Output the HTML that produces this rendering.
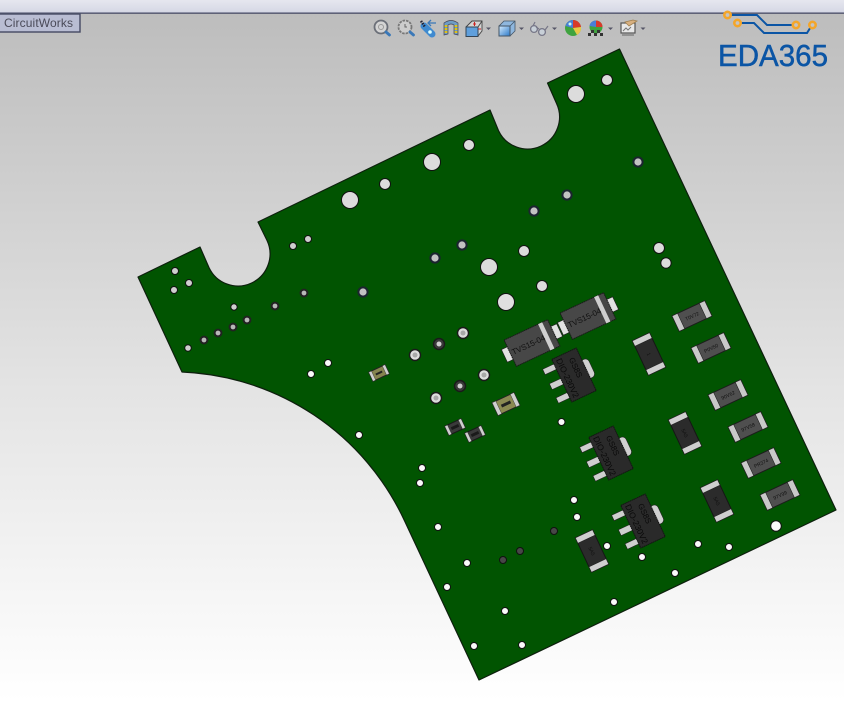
<!DOCTYPE html>
<html>
<head>
<meta charset="utf-8">
<style>
html,body{margin:0;padding:0;width:844px;height:701px;overflow:hidden;background:#fff}
svg{display:block}
text{font-family:"Liberation Sans",sans-serif}
</style>
</head>
<body>
<svg width="844" height="701" viewBox="0 0 844 701" xmlns="http://www.w3.org/2000/svg">
<defs>
<linearGradient id="bg" gradientUnits="userSpaceOnUse" x1="0" y1="14" x2="0" y2="701">
<stop offset="0" stop-color="#bdbdbd"/><stop offset=".55" stop-color="#e4e4e4"/><stop offset="1" stop-color="#ffffff"/>
</linearGradient>
<linearGradient id="top" x1="0" y1="0" x2="0" y2="1">
<stop offset="0" stop-color="#e6e7ef"/><stop offset="1" stop-color="#d6d8e5"/>
</linearGradient>
<linearGradient id="blue" x1="0" y1="0" x2="1" y2="1"><stop offset="0" stop-color="#d5ecff"/><stop offset="1" stop-color="#2a78c8"/></linearGradient>
<g id="r">
<rect x="-18" y="-8.5" width="36" height="17" fill="#4f4f4f" stroke="#1c1c1c"/>
<rect x="-18" y="-8.5" width="6" height="17" fill="#c9c9c9" stroke="#222" stroke-width=".6"/>
<rect x="12" y="-8.5" width="6" height="17" fill="#c9c9c9" stroke="#222" stroke-width=".6"/>
</g>
<g id="d">
<rect x="-19" y="-9.5" width="38" height="19" fill="#2b2b2b" stroke="#151515"/>
<rect x="-19" y="-9.5" width="6" height="19" fill="#cfcfcf" stroke="#222" stroke-width=".6"/>
<rect x="13" y="-9.5" width="6" height="19" fill="#cfcfcf" stroke="#222" stroke-width=".6"/>
</g>
<g id="smb">
<rect x="-30.5" y="-7" width="8" height="14" fill="#e2e2e2" stroke="#222" stroke-width=".7"/>
<rect x="22.5" y="-7" width="8" height="14" fill="#e2e2e2" stroke="#222" stroke-width=".7"/>
<rect x="-24" y="-14.5" width="48" height="29" fill="#474747" stroke="#1a1a1a" stroke-dasharray="1.5 .5"/>
<rect x="13.5" y="-14.5" width="4.5" height="29" fill="#cfcfcf"/>
</g>
<g id="sot">
<rect x="-26" y="-18.5" width="13" height="6" fill="#cfcfcf" stroke="#222" stroke-width=".6"/>
<rect x="-26" y="-2.5" width="13" height="6.5" fill="#cfcfcf" stroke="#222" stroke-width=".6"/>
<rect x="-26" y="13" width="13" height="6" fill="#cfcfcf" stroke="#222" stroke-width=".6"/>
<rect x="10" y="-10" width="9.5" height="20" rx="4" fill="#d0d0d0" stroke="#222" stroke-width=".6"/>
<rect x="-13.5" y="-23.5" width="27" height="47" fill="#2a2a2a" stroke="#141414" stroke-dasharray="1.5 .5"/>
</g>
<g id="s1">
<rect x="-9" y="-5" width="18" height="10" fill="#85834f" stroke="#222"/>
<rect x="-9" y="-5" width="3" height="10" fill="#cfcfcf" stroke="#333" stroke-width=".4"/>
<rect x="6" y="-5" width="3" height="10" fill="#cfcfcf" stroke="#333" stroke-width=".4"/>
<rect x="-3.5" y="-1" width="7" height="2" fill="#222"/>
</g>
<g id="s2">
<rect x="-12" y="-7" width="24" height="14" fill="#8b8a52" stroke="#222"/>
<rect x="-12" y="-7" width="4" height="14" fill="#cfcfcf" stroke="#333" stroke-width=".4"/>
<rect x="8" y="-7" width="4" height="14" fill="#cfcfcf" stroke="#333" stroke-width=".4"/>
<rect x="-5" y="-1.5" width="10" height="3" fill="#222"/>
</g>
<g id="s3">
<rect x="-9" y="-5" width="18" height="10" fill="#3a3a3a" stroke="#191919"/>
<rect x="-9" y="-5" width="3" height="10" fill="#cfcfcf" stroke="#333" stroke-width=".4"/>
<rect x="6" y="-5" width="3" height="10" fill="#cfcfcf" stroke="#333" stroke-width=".4"/>
<rect x="-4" y="-1.5" width="8" height="3" fill="#1a1a1a"/>
</g>
</defs>

<rect width="844" height="701" fill="url(#bg)"/>
<rect width="844" height="12" fill="url(#top)"/>
<rect y="12" width="844" height="1" fill="#8d90a5"/>
<rect y="13" width="844" height="1" fill="#5f6277"/>

<!-- tab -->
<rect x="-2" y="14" width="82" height="18" fill="#b9bdd3" stroke="#454a63" stroke-width="1.4"/>
<text x="4" y="27" font-size="12" fill="#4a4a58" textLength="69">CircuitWorks</text>

<!-- toolbar icons -->
<g>
<circle cx="381" cy="27" r="6.500" fill="#d4d4d4" stroke="#6b6f78" stroke-width="1.800"/><circle cx="381" cy="27" r="2.500" fill="none" stroke="#999"/>
<path d="M386,32 L389.500,35" stroke="#3a78b8" stroke-width="2.800" stroke-linecap="round"/>
<circle cx="405" cy="27" r="6.500" fill="#cccccc" stroke="#777" stroke-width="1.800" stroke-dasharray="2.500 1"/><path d="M405,24v3h2" stroke="#666" fill="none"/>
<path d="M410,32 L413.500,35" stroke="#3a78b8" stroke-width="2.800" stroke-linecap="round"/>
<path d="M424,26 L432,34" stroke="#3f8ad0" stroke-width="7" stroke-linecap="round"/>
<path d="M421,21 L425,27" stroke="#223" stroke-width="2.500" stroke-dasharray="1.500 1"/>
<circle cx="430" cy="32" r="1.800" fill="#dff"/>
<path d="M428,23 H436 M431,20 L428,23 L431,26" stroke="#3a78b8" stroke-width="1.300" fill="none"/>
<path d="M444,23 Q451,18 458,23 V35 L454,34 V25 Q451,23 448,25 V34 L444,35 Z" fill="#6f9cc4" stroke="#445" stroke-width=".7"/>
<path d="M446,25 V34 M456,25 V34" stroke="#e0c21a" stroke-width="2.800" stroke-dasharray="2 1"/>
<path d="M466,27 L472,21 H482 V31 L478,36 H466Z" fill="#d4d4d4" stroke="#444" stroke-width=".9"/>
<rect x="466" y="27" width="12" height="9.500" fill="#5f9fdc" stroke="#345"/>
<path d="M478,27 L482,21" stroke="#444" stroke-width=".9"/>
<path d="M473,24 h3 m-1.500,-2 v4 M478,29 h3" stroke="#c22" stroke-width="1"/>
<path d="M486,27.500 h5 l-2.500,2.500z" fill="#556"/>
<path d="M499,26 L504,21 H515 V31 L510,36 H499Z" fill="#8fb7de" stroke="#456" stroke-width=".8"/>
<rect x="499" y="26" width="11" height="10" fill="url(#blue)" stroke="#456"/>
<path d="M510,26 L515,21" stroke="#456" stroke-width=".8"/>
<path d="M519,27.500 h5 l-2.500,2.500z" fill="#556"/>
<circle cx="534" cy="29" r="3.400" fill="#c8d0d8" stroke="#778" stroke-width="1.300"/><circle cx="542" cy="32" r="3.400" fill="#c8d0d8" stroke="#778" stroke-width="1.300"/>
<path d="M536,27 L539,29 M545,30 L548,26 M533,26 L535,22" stroke="#778" fill="none" stroke-width="1.200"/>
<path d="M552,27.500 h5 l-2.500,2.500z" fill="#556"/>
<circle cx="573" cy="28" r="8" fill="#3fa33f"/>
<path d="M573,28 L565.500,26 A8,8 0 0 1 573,20Z" fill="#4a7ed8"/><path d="M573,28 V20 A8,8 0 0 1 581,27Z" fill="#d83a2a"/>
<path d="M573,28 L581,27 A8,8 0 0 1 577,35Z" fill="#e8c94a"/><circle cx="570" cy="24" r="1.500" fill="#cfe"/>
<circle cx="596" cy="27" r="6.500" fill="#3fa33f"/>
<path d="M596,27 L589.500,26 A6.500,6.500 0 0 1 596,20.500Z" fill="#4a7ed8"/><path d="M596,27 V20.500 A6.500,6.500 0 0 1 602.500,27Z" fill="#d83a2a"/>
<path d="M588,33 h3v3h-3z M594,33 h3v3h-3z M600,33 h3v3h-3z M591,30 h3v3h-3z M597,30 h3v3h-3z" fill="#333"/>
<path d="M608,27.500 h5 l-2.500,2.500z" fill="#556"/>
<rect x="621" y="23" width="14" height="10" fill="#e8e8e8" stroke="#555" stroke-width="1.200"/>
<path d="M622,35 h12" stroke="#666"/>
<path d="M625,22 l8,-2 4,1 -8,5z" stroke="#a08050" fill="#d8b080" stroke-width=".8"/>
<path d="M623,31 l3,-3 2,2 3,-3" stroke="#777" fill="none"/>
<path d="M640.500,27.500 h5 l-2.500,2.500z" fill="#556"/>
</g>

<!-- logo -->
<path d="M728,15 H757 L767,25 H796" stroke="#0b55a5" stroke-width="2" fill="none"/>
<path d="M737,23 H754 L764,33 H807 L812,25" stroke="#0b55a5" stroke-width="2" fill="none"/>
<g fill="#c4c4c4" stroke="#f4a62a" stroke-width="2.600">
<circle cx="727.500" cy="15" r="3.200"/><circle cx="737.500" cy="23" r="3.200"/><circle cx="796" cy="25" r="3.200"/><circle cx="812.500" cy="25" r="3.200"/>
</g>
<text x="718" y="66" font-size="31" fill="#0b55a5" stroke="#0b55a5" stroke-width=".5" textLength="110" lengthAdjust="spacingAndGlyphs">EDA365</text>

<!-- board -->
<path d="M138,277 L200,247 L209,267.600 A32,32 0 0 0 267,240.400 L258,222 L490,110 L498.500,130.600 A32,32 0 0 0 556.500,103.400 L547.500,83 L619.500,49 L836,510 L479,680 L404.400,520.500 A257,257 0 0 0 182,372 Z" fill="#015401" stroke="#0d1f0d" stroke-width="1.200" stroke-linejoin="round"/>

<!-- large holes -->
<g fill="#dcdcdc" stroke="#111" stroke-width="1">
<circle cx="576" cy="94" r="8.500"/><circle cx="432" cy="162" r="8.500"/><circle cx="350" cy="200" r="8.500"/>
<circle cx="489" cy="267" r="8.500"/><circle cx="506" cy="302" r="8.500" fill="#e0e0e0"/>
<circle cx="607" cy="80" r="5.500"/><circle cx="469" cy="145" r="5.500"/><circle cx="385" cy="184" r="5.500"/>
<circle cx="524" cy="251" r="5.500"/><circle cx="542" cy="286" r="5.500"/><circle cx="659" cy="248" r="5.500"/><circle cx="666" cy="263" r="5.200"/>
</g>
<!-- gray plated -->
<g fill="#c2c2c2" stroke="#1c2430" stroke-width="2">
<circle cx="638" cy="162" r="4.600"/><circle cx="567" cy="195" r="4.600"/><circle cx="534" cy="211" r="4.600"/>
<circle cx="462" cy="245" r="4.600"/><circle cx="435" cy="258" r="4.600"/><circle cx="363" cy="292" r="4.600"/>
</g>
<!-- small grey -->
<g fill="#cfcfcf" stroke="#111" stroke-width="1">
<circle cx="175" cy="271" r="3.500"/><circle cx="189" cy="283" r="3.500"/><circle cx="174" cy="290" r="3.500"/>
<circle cx="293" cy="246" r="3.500"/><circle cx="308" cy="239" r="3.500"/><circle cx="234" cy="307" r="3.200"/><circle cx="188" cy="348" r="3.300"/>
</g>
<g fill="#b8b8b8" stroke="#222" stroke-width="2">
<circle cx="304" cy="293" r="3.400"/><circle cx="275" cy="306" r="3.400"/><circle cx="247" cy="320" r="3.400"/>
<circle cx="233" cy="327" r="3.400"/><circle cx="218" cy="333" r="3.400"/><circle cx="204" cy="340" r="3.400"/>
</g>
<!-- white vias -->
<g fill="#fafafa" stroke="#111" stroke-width="1">
<circle cx="311" cy="374" r="3.500"/><circle cx="328" cy="363" r="3.500"/><circle cx="359" cy="435" r="3.500"/>
<circle cx="422" cy="468" r="3.500"/><circle cx="420" cy="483" r="3.500"/><circle cx="438" cy="527" r="3.500"/>
<circle cx="467" cy="563" r="3.500"/><circle cx="447" cy="587" r="3.500"/><circle cx="505" cy="611" r="3.500"/>
<circle cx="474" cy="646" r="3.500"/><circle cx="522" cy="645" r="3.500"/><circle cx="561.500" cy="422" r="3.500"/>
<circle cx="574" cy="500" r="3.500"/><circle cx="577" cy="517" r="3.500"/><circle cx="607" cy="546" r="3.500"/>
<circle cx="642" cy="557" r="3.500"/><circle cx="675" cy="573" r="3.500"/><circle cx="698" cy="544" r="3.500"/>
<circle cx="729" cy="547" r="3.500"/><circle cx="614" cy="602" r="3.500"/><circle cx="776" cy="526" r="5.300"/>
</g>
<g fill="#474747" stroke="#111" stroke-width="1">
<circle cx="554" cy="531" r="3.500"/><circle cx="520" cy="551" r="3.500"/><circle cx="503" cy="560" r="3.500"/>
</g>
<!-- metallic rings -->
<g stroke="#1a1a1a" stroke-width="1.400">
<circle cx="463" cy="333" r="5.500" fill="#dddddd"/><circle cx="439" cy="344" r="5.500" fill="#3a3a3a"/>
<circle cx="415" cy="355" r="5.500" fill="#dddddd"/><circle cx="484" cy="375" r="5.500" fill="#dddddd"/>
<circle cx="460" cy="386" r="5.500" fill="#3a3a3a"/><circle cx="436" cy="398" r="5.500" fill="#dddddd"/>
</g>
<g fill="#a8a8a8">
<circle cx="463" cy="333" r="2.500"/><circle cx="439" cy="344" r="2.500" fill="#cfcfcf"/><circle cx="415" cy="355" r="2.500"/>
<circle cx="484" cy="375" r="2.500"/><circle cx="460" cy="386" r="2.500" fill="#cfcfcf"/><circle cx="436" cy="398" r="2.500"/>
</g>

<!-- resistors -->
<g font-size="5" fill="#111" text-anchor="middle">
<g transform="translate(692,316) rotate(-25.100)"><use href="#r"/><text y="2">T0V72</text></g>
<g transform="translate(711,348) rotate(-25.100)"><use href="#r"/><text y="2">P0V50</text></g>
<g transform="translate(728,395) rotate(-25.100)"><use href="#r"/><text y="2">90V62</text></g>
<g transform="translate(748,427) rotate(-25.100)"><use href="#r"/><text y="2">97V58</text></g>
<g transform="translate(761,463) rotate(-25.100)"><use href="#r"/><text y="2">PR374</text></g>
<g transform="translate(780,495) rotate(-25.100)"><use href="#r"/><text y="2">97V99</text></g>
<g transform="translate(649,354) rotate(64.900)"><use href="#d"/><text y="2">1</text></g>
<g transform="translate(685,433) rotate(64.900)"><use href="#d"/><text y="2">5A5</text></g>
<g transform="translate(717,501) rotate(64.900)"><use href="#d"/><text y="2">5A5</text></g>
<g transform="translate(592,551) rotate(64.900)"><use href="#d"/><text y="2">5A5</text></g>
</g>

<!-- diodes -->
<g font-size="8" fill="#101010" text-anchor="middle">
<g transform="translate(532,343) rotate(-25.100)"><use href="#smb"/><text x="-4" y="3">TVS15-04</text></g>
<g transform="translate(588,316) rotate(-25.100)"><use href="#smb"/><text x="-4" y="3">TVS15-04</text></g>
</g>

<!-- SOT-223 -->
<g fill="#0a0a0a" text-anchor="middle">
<g transform="translate(574,375) rotate(-25.100)"><use href="#sot"/><text transform="translate(-10,0) rotate(90)" font-size="8.500">DIO-230V2</text><text transform="translate(2,-6) rotate(90)" font-size="8">GS8S</text></g>
<g transform="translate(611,453) rotate(-25.100)"><use href="#sot"/><text transform="translate(-10,0) rotate(90)" font-size="8.500">DIO-230V2</text><text transform="translate(2,-6) rotate(90)" font-size="8">GS8S</text></g>
<g transform="translate(643,521) rotate(-25.100)"><use href="#sot"/><text transform="translate(-10,0) rotate(90)" font-size="8.500">DIO-230V2</text><text transform="translate(2,-6) rotate(90)" font-size="8">GS8S</text></g>
</g>

<!-- small parts -->
<g transform="translate(379,373) rotate(-25.100)"><use href="#s1"/></g>
<g transform="translate(506,404) rotate(-25.100)"><use href="#s2"/></g>
<g transform="translate(455,427) rotate(-25.100)"><use href="#s3"/></g>
<g transform="translate(475,434) rotate(-25.100)"><use href="#s3"/></g>
</svg>
</body>
</html>
